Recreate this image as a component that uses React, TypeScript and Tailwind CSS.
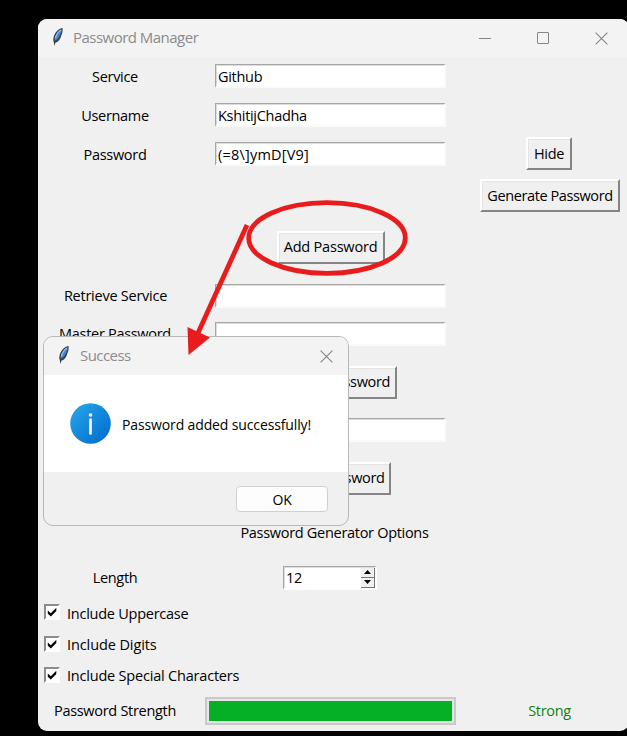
import type { ReactNode } from "react";

function Feather() {
  return (
    <svg width="14" height="20" viewBox="0 0 14 20" className="relative -top-px shrink-0">
      <path d="M11.6 1C8.2 1.3 4.4 4.6 2.9 9.1 2.1 11.8 2.1 14 2.8 15.3L3.4 19 4.4 15.7C7.6 14.8 9.6 12 10.4 8.3 11.8 6 11.6 3.3 11.6 1Z" fill="#36414d" />
      <path d="M10.8 2.2C8.2 3.1 5.2 6.2 4 9.8L3.5 13.8C6.5 12.6 8.4 10.3 9.1 7.5 10.6 5.5 10.6 3.7 10.8 2.2Z" fill="#4583d0" />
      <path d="M9.9 3C7.1 5 5 8.6 4.4 11.5" fill="none" stroke="#8dbbf0" strokeWidth="1.4" />
    </svg>
  );
}

function CloseIcon() {
  return (
    <svg width="13" height="13" viewBox="0 0 13 13" fill="none" stroke="#858585" strokeWidth="1.1">
      <path d="M.6.6 12.4 12.4M12.4.6.6 12.4" />
    </svg>
  );
}

function Cell({ children, className = "" }: { children?: ReactNode; className?: string }) {
  return <div className={`flex items-center justify-center whitespace-nowrap ${className}`}>{children}</div>;
}

function Entry({ value = "", className = "" }: { value?: string; className?: string }) {
  return (
    <div className={`mb-px flex h-6 w-[231px] items-center border-t-[1.5px] border-r-2 border-b-2 border-l-[1.5px] border-t-[#a6a6a6] border-r-[#fafafa] border-b-[#fafafa] border-l-[#a6a6a6] bg-white pl-0.5 shadow-[inset_1px_1px_0_#dcdcdc] ${className}`}>
      <span className="pt-[3px]">{value}</span>
    </div>
  );
}

function Button({ children, className }: { children: ReactNode; className: string }) {
  return (
    <button className={`flex h-[33px] shrink-0 items-center justify-center border-2 border-t-white border-r-[#858585] border-b-[#858585] border-l-white bg-[#f0f0f0] pt-px shadow-[inset_1px_1px_0_#e4e4e4] ${className}`}>
      {children}
    </button>
  );
}

function Check({ label, className }: { label: string; className: string }) {
  return (
    <div className="col-span-3 flex items-center pl-1.5">
      <span className="mb-0.5 flex size-4 items-center justify-center border-2 border-t-[#8c8c8c] border-r-white border-b-white border-l-[#8c8c8c] bg-white">
        <svg width="10" height="10" viewBox="0 0 10 10" className="shrink-0">
          <path d="M.8 3.5v3.2L3.8 9.5 9.3 4V.8L3.8 6.2Z" fill="#000" />
        </svg>
      </span>
      <span className={`ml-[7px] pt-0.5 whitespace-nowrap ${className}`}>{label}</span>
    </div>
  );
}

function Dialog() {
  return (
    <div className="absolute top-[336px] left-[43px] flex h-[190px] w-[306px] flex-col overflow-hidden rounded-[10px] border border-[#b8b8b8] bg-[#f0f0f0]">
      <div className="flex h-[38px] items-center bg-[#f3f3f3] pr-[15px] pl-[13px]">
        <Feather />
        <span className="ml-[9px] flex-1 pb-px text-[15px] tracking-[-0.55px] text-[#8b8b8b]">Success</span>
        <CloseIcon />
      </div>
      <div className="flex h-[97px] items-center bg-white pl-[26px]">
        <svg width="41" height="41" viewBox="0 0 41 41">
          <defs>
            <linearGradient id="info" x1="0" y1="0" x2="1" y2="1">
              <stop stopColor="#28a8ea" />
              <stop offset="1" stopColor="#0069cc" />
            </linearGradient>
          </defs>
          <circle cx="20.5" cy="20.5" r="20.3" fill="url(#info)" />
          <circle cx="20.5" cy="12" r="1.8" fill="#fff" />
          <path d="M20.5 16.5v14" stroke="#fff" strokeWidth="2.6" strokeLinecap="round" />
        </svg>
        <span className="ml-[11px] pt-[3px] text-[14px] tracking-[-0.13px] whitespace-nowrap">Password added successfully!</span>
      </div>
      <div className="flex flex-1 items-center justify-end pr-5">
        <button className="flex h-[26px] w-[92px] items-center justify-center rounded-[4px] border border-[#d0d0d0] bg-[#fdfdfd] pt-0.5 text-[14px]">OK</button>
      </div>
    </div>
  );
}

export default function App() {
  return (
    <div className="relative h-[736px] w-[627px] overflow-hidden bg-black pt-[19px] pl-[38px] font-['Open_Sans','Noto_Sans',sans-serif] text-[14.5px] leading-none tracking-[-0.3px] text-black">
      <div className="h-[712px] w-[591px] overflow-hidden rounded-[9px] bg-[#f0f0f0]">
        <div className="flex h-[38px] items-center bg-[#f3f3f3] pl-[13px] text-[#8b8b8b]">
          <Feather />
          <span className="ml-2 flex-1 pb-px text-[15px] tracking-[-0.52px]">Password Manager</span>
          <span className="mr-[46px] h-px w-3 bg-[#858585]" />
          <span className="mr-[46px] size-3 rounded-[1px] border border-[#858585]" />
          <span className="mr-[21px]"><CloseIcon /></span>
        </div>
        <div className="grid grid-cols-[154px_277px_160px] grid-rows-[39px_39px_39px_43px_60px_38px_38px_58px_38px_58px_53px_37px_32px_31px_31px_40px]">
          <Cell className="pt-px">Service</Cell>
          <Cell><Entry value="Github" /></Cell>
          <Cell />
          <Cell className="pt-px">Username</Cell>
          <Cell><Entry value="KshitijChadha" /></Cell>
          <Cell />
          <Cell className="pt-px">Password</Cell>
          <Cell><Entry value="(=8\]ymD[V9]" className="tracking-[0.2px]" /></Cell>
          <Cell><Button className="mb-0.5 w-[46px]">Hide</Button></Cell>
          <Cell className="col-start-3 pl-0.5"><Button className="w-[140px] tracking-[-0.4px]">Generate Password</Button></Cell>
          <Cell className="col-start-2"><Button className="w-[108px] tracking-[-0.2px]">Add Password</Button></Cell>
          <Cell className="col-start-1 pl-px tracking-[-0.25px]">Retrieve Service</Cell>
          <Cell><Entry /></Cell>
          <Cell />
          <Cell className="pt-px">Master Password</Cell>
          <Cell><Entry /></Cell>
          <Cell className="col-start-2"><Button className="w-[133px]">Retrieve Password</Button></Cell>
          <Cell className="col-start-2"><Entry /></Cell>
          <Cell className="col-start-2"><Button className="w-[121px]">Delete Password</Button></Cell>
          <Cell className="col-span-3 pl-0.5">Password Generator Options</Cell>
          <Cell>Length</Cell>
          <Cell>
            <div className="mr-px mb-px flex h-6 w-[94px] items-center border-t-[1.5px] border-r-2 border-b-2 border-l-[1.5px] border-t-[#a6a6a6] border-r-white border-b-white border-l-[#a6a6a6] bg-white pl-0.5 shadow-[inset_1px_1px_0_#dcdcdc]">
              <span className="flex-1 pt-0.5">12</span>
              <span className="flex h-5 w-3.5 flex-col">
                <span className="flex h-2.5 items-center justify-center border-r border-b border-[#757575] bg-[#f0f0f0]">
                  <svg width="7" height="4" viewBox="0 0 7 4"><path d="M0 4 3.5 0 7 4Z" /></svg>
                </span>
                <span className="flex h-2.5 items-center justify-center border-r border-b border-[#757575] bg-[#f0f0f0]">
                  <svg width="7" height="4" viewBox="0 0 7 4"><path d="M0 0 3.5 4 7 0Z" /></svg>
                </span>
              </span>
            </div>
          </Cell>
          <Cell />
          <Check label="Include Uppercase" className="tracking-[-0.25px]" />
          <Check label="Include Digits" className="tracking-[-0.1px]" />
          <Check label="Include Special Characters" className="tracking-[-0.2px]" />
          <Cell>Password Strength</Cell>
          <Cell>
            <div className="h-7 w-[251px] border-2 border-[#c9c9c9] bg-[#e6e6e6] p-0.5">
              <div className="h-full w-full bg-[#06b025]" />
            </div>
          </Cell>
          <Cell className="pl-px text-[#158015]">Strong</Cell>
        </div>
      </div>
      <Dialog />
      <svg className="pointer-events-none absolute top-0 left-0" width="627" height="736" viewBox="0 0 627 736">
        <ellipse cx="327" cy="238" rx="78.3" ry="35.3" fill="none" stroke="#e81c1c" strokeWidth="4.8" />
        <path d="M247 225 198 333" stroke="#e81c1c" strokeWidth="4.8" />
        <path d="M187.5 327 210 337.5 188.5 355Z" fill="#e81c1c" />
      </svg>
    </div>
  );
}
